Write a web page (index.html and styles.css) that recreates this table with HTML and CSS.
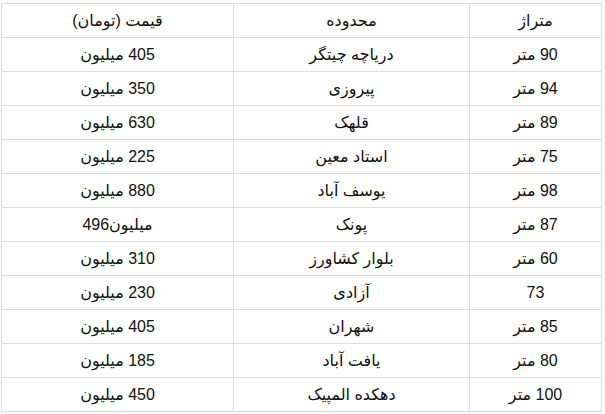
FILE: index.html
```html
<!DOCTYPE html>
<html lang="fa" dir="rtl">
<head>
<meta charset="utf-8">
<link rel="stylesheet" href="styles.css">
</head>
<body>
<table class="prices">
  <colgroup><col class="c-area"><col class="c-zone"><col class="c-price"></colgroup>
  <tr><td>متراژ</td><td>محدوده</td><td>قیمت (تومان)</td></tr>
  <tr><td>90 متر</td><td>دریاچه چیتگر</td><td>405 میلیون</td></tr>
  <tr><td>94 متر</td><td>پیروزی</td><td>350 میلیون</td></tr>
  <tr><td>89 متر</td><td>قلهک</td><td>630 میلیون</td></tr>
  <tr><td>75 متر</td><td>استاد معین</td><td>225 میلیون</td></tr>
  <tr><td>98 متر</td><td>یوسف آباد</td><td>880 میلیون</td></tr>
  <tr><td>87 متر</td><td>پونک</td><td>میلیون496</td></tr>
  <tr><td>60 متر</td><td>بلوار کشاورز</td><td>310 میلیون</td></tr>
  <tr><td>73</td><td>آزادی</td><td>230 میلیون</td></tr>
  <tr><td>85 متر</td><td>شهران</td><td>405 میلیون</td></tr>
  <tr><td>80 متر</td><td>یافت آباد</td><td>185 میلیون</td></tr>
  <tr><td>100 متر</td><td>دهکده المپیک</td><td>450 میلیون</td></tr>
</table>
</body>
</html>
```
FILE: styles.css
```css
html, body { margin: 0; padding: 0; background: #fff; }
body { padding: 3px 3px 0 2px; }
.prices {
  border-collapse: collapse;
  width: 600px;
  table-layout: fixed;
  font-family: "Liberation Sans", "DejaVu Sans", sans-serif;
  font-size: 16px;
  color: #111;
}
.c-area { width: 132px; }
.c-zone { width: 236px; }
.c-price { width: 232px; }
.prices td {
  border: 1px solid #dcdcdc;
  height: 33px;
  padding: 0;
  text-align: center;
  vertical-align: middle;
}
```
